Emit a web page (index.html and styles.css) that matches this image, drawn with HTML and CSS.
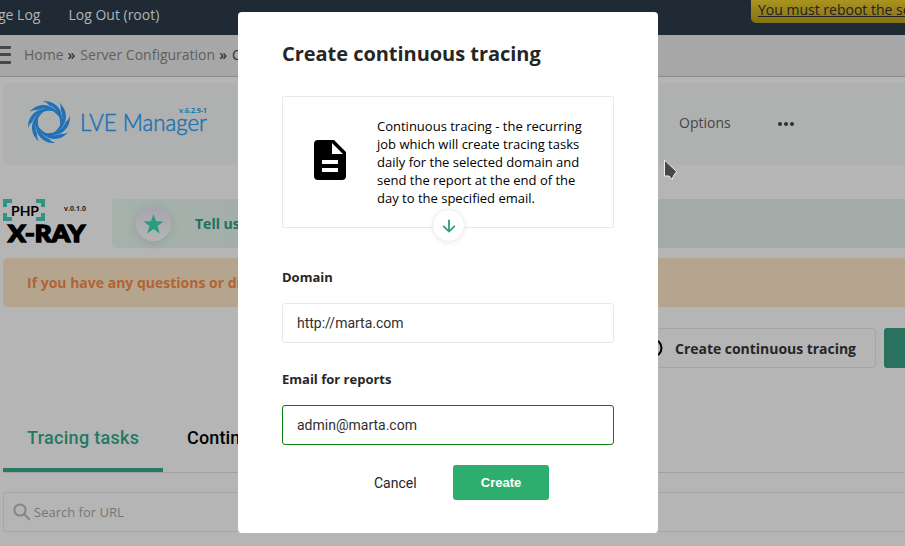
FILE: index.html
```html
<!DOCTYPE html>
<html lang="en">
<head>
<meta charset="utf-8">
<title>LVE Manager</title>
<link rel="stylesheet" href="styles.css">
</head>
<body>
<header class="topbar">
  <nav class="toplinks"><span class="link-log">ge Log</span><span>Log Out (root)</span></nav>
  <a class="reboot">You must reboot the server</a>
</header>
<div class="crumbs">
  <div class="burger"><i></i><i></i><i></i></div>
  <span class="muted">Home</span><b>»</b><span class="muted">Server Configuration</span><b>»</b><span>C</span>
</div>
<main class="page">
  <section class="panel">
    <svg class="swirl" viewBox="-21 -20 42 40">
      <defs><path id="blade" d="M-20 6C-21-7-9-18 9-9.500C-4-13-13-8-16 0Q-19 2-20 6Z"/></defs>
      <use href="#blade"/><use href="#blade" transform="rotate(45)"/><use href="#blade" transform="rotate(90)"/><use href="#blade" transform="rotate(135)"/><use href="#blade" transform="rotate(180)"/><use href="#blade" transform="rotate(225)"/><use href="#blade" transform="rotate(270)"/><use href="#blade" transform="rotate(315)"/>
    </svg>
    <svg class="brand" width="140" height="40" viewBox="0 0 140 40">
      <text class="brand-name" x="0" y="26.5" textLength="127" lengthAdjust="spacingAndGlyphs">LVE Manager</text>
      <text class="brand-version" x="99" y="9" textLength="28" lengthAdjust="spacingAndGlyphs">v.6.2.9-1</text>
    </svg>
    <span class="options">Options</span>
    <span class="dots"><i></i><i></i><i></i></span>
  </section>
  <section class="xrow">
    <svg class="xlogo" width="109" height="49" viewBox="0 0 109 49">
      <path class="bracket" d="M0 0H9V4H4V8H0ZM33 0H42V8H38V4H33ZM0 14H4V18H9V22H0ZM38 14H42V22H33V18H38Z"/>
      <text class="php" x="8" y="17" textLength="28" lengthAdjust="spacingAndGlyphs">PHP</text>
      <text class="xray" x="5" y="42.5" textLength="77" lengthAdjust="spacingAndGlyphs">X-RAY</text>
      <text class="xversion" x="61" y="12" textLength="22" lengthAdjust="spacingAndGlyphs">v.0.1.0</text>
    </svg>
    <div class="feedback">
      <div class="star"><svg width="21" height="20" viewBox="0 0 21 20"><path d="M10.500 0L13 7.300L20.500 7.500L14.500 12.100L16.800 19.500L10.500 15.100L4.200 19.500L6.500 12.100L.5 7.500L8 7.300Z"/></svg></div>
      <span>Tell us</span>
    </div>
  </section>
  <section class="question">If you have any questions or di</section>
  <section class="actions">
    <div class="outline"><svg width="20" height="20" viewBox="0 0 20 20"><circle cx="10" cy="10" r="8.5"/></svg>Create continuous tracing</div>
    <div class="solid"></div>
  </section>
  <nav class="tabs"><span class="tab active">Tracing tasks</span><span class="tab next">Continuous</span></nav>
  <div class="search"><svg width="18" height="18" viewBox="0 0 18 18"><circle cx="7" cy="7" r="5.6"/><path d="M11 11L16.800 16.800"/></svg>Search for URL</div>
</main>
<div class="overlay">
  <div class="modal">
    <h1>Create continuous tracing</h1>
    <div class="info">
      <svg class="doc" width="32" height="40" viewBox="0 0 32 40"><path fill-rule="evenodd" d="M4 0H20L32 12V36Q32 40 28 40H4Q0 40 0 36V4Q0 0 4 0ZM18 3V14H29ZM8 20V24H24V20ZM8 28V32H24V28Z"/></svg>
      <p>Continuous tracing - the recurring<br>job which will create tracing tasks<br>daily for the selected domain and<br>send the report at the end of the<br>day to the specified email.</p>
      <div class="arrow"><svg width="14" height="14" viewBox="0 0 14 14"><path d="M7 .8V12.500M1.200 6.800L7 12.600L12.800 6.800"/></svg></div>
    </div>
    <label>Domain</label>
    <div class="field">http://marta.com</div>
    <label>Email for reports</label>
    <div class="field valid">admin@marta.com</div>
    <div class="buttons"><span class="cancel">Cancel</span><span class="create">Create</span></div>
  </div>
  <svg class="cursor" width="16" height="24" viewBox="0 0 16 24"><path d="M1.500 2V18H6L9 21.500L10.500 18L13.500 13.500Z"/></svg>
</div>
</body>
</html>
```

FILE: styles.css
```css
* { box-sizing: border-box; }
body { margin: 0; width: 905px; height: 546px; overflow: hidden; background: #b5b5b5; font-family: "Open Sans", sans-serif; color: #262626; white-space: nowrap; }
svg { flex: none; display: block; }
.topbar { height: 35px; background: #1f2a35; display: flex; justify-content: space-between; align-items: flex-start; overflow: hidden; font: 14px/20px "Open Sans", sans-serif; color: #b2b4b6; }
.toplinks { display: flex; gap: 28px; padding-top: 5px; margin-left: -2px; }
.reboot { width: 154px; height: 23px; padding-left: 7px; overflow: hidden; border-bottom-left-radius: 5px; background: linear-gradient(#a99321, #857013); color: #222; text-decoration: underline; }
.crumbs { height: 42px; background: #a7a7a7; border-bottom: 1px solid #8d8d8d; display: flex; align-items: center; padding-bottom: 2px; font: 14px/20px "Open Sans", sans-serif; color: #303030; }
.crumbs .muted { color: #606060; }
.crumbs b { font-weight: 600; margin: 0 5px 0 4px; }
.burger { width: 11px; height: 18px; margin-right: 13px; display: flex; flex-direction: column; justify-content: space-between; }
.burger i { height: 3px; background: #484848; border-radius: 0 1px 1px 0; }
.page { padding: 6px 0 0 3px; }
.panel { height: 82px; background: #afb1b0; border-radius: 6px 0 0 6px; display: flex; align-items: center; padding-left: 24px; }
.swirl { width: 44px; height: 42px; margin-right: 9px; margin-top: -4px; fill: #2071b5; }
.brand { margin-right: 459px; margin-top: -1px; }
.brand text { fill: #2071b5; }
.brand-name { font: 300 23px Lato, sans-serif; stroke: #2071b5; stroke-width: .5px; }
.brand-version { font: 700 7px "Open Sans", sans-serif; }
.options { font-size: 14px; width: 99px; margin-top: -3px; color: #454545; }
.dots { display: flex; gap: 2px; }
.dots i { width: 4px; height: 4px; border-radius: 50%; background: #303030; }
.xrow { margin-top: 34px; height: 49px; display: flex; }
.bracket { fill: #319386; }
.php { font: 700 14px Lato, sans-serif; }
.xray { font: 900 23px Lato, sans-serif; stroke: #000; stroke-width: 1.5px; }
.xversion { font: 700 7px "Open Sans", sans-serif; fill: #262626; }
.feedback { flex: 1; background: linear-gradient(90deg, #a5b1ab, #a2aba7 45%); border-radius: 5px 0 0 5px; display: flex; align-items: center; padding-left: 24px; font-weight: 700; font-size: 14px; color: #236f5d; }
.star { width: 35px; height: 35px; border-radius: 50%; background: linear-gradient(#a4a5ad, #b5b5b7); display: grid; place-items: center; margin-right: 24px; box-shadow: 0 2px 8px rgba(60,80,70,.16); fill: #269e7d; }
.question { margin-top: 10px; height: 49px; background: #b5a58e; border-radius: 5px 0 0 5px; padding-left: 24px; font: 700 14px/50px "Open Sans", sans-serif; color: #b16432; }
.actions { margin-top: 21px; height: 40px; display: flex; justify-content: flex-end; gap: 8px; }
.outline { width: 248px; border: 1px solid #a6a6a6; border-radius: 3px; display: flex; align-items: center; gap: 12px; padding-left: 14px; font-weight: 700; font-size: 14px; letter-spacing: -.03px; }
.outline svg { fill: none; stroke: #000; stroke-width: 2; }
.solid { width: 21px; background: #2a7160; border-radius: 3px 0 0 3px; }
.tabs { margin-top: 30px; height: 75px; border-bottom: 1px solid #a2a2a2; display: flex; font: 500 18px/79px Roboto, sans-serif; letter-spacing: .3px; color: #000; }
.tab { padding: 0 24px; height: 74px; }
.tab.active { width: 160px; border-bottom: 4px solid #237963; color: #237963; }
.tab.next { letter-spacing: .15px; }
.search { margin-top: 19px; height: 40px; width: 920px; border: 1px solid #a6a6a6; border-radius: 3px; display: flex; align-items: center; gap: 3px; padding-left: 9px; font-size: 13px; color: #757575; }
.search svg { fill: none; stroke: #858585; stroke-width: 2; }
.overlay { position: fixed; inset: 0; padding-top: 12px; }
.modal { width: 420px; height: 521px; margin-left: 238px; padding: 26px 44px 0; background: #fff; border-radius: 4px; }
.modal h1 { margin: 0 0 26px; font: 700 20px/32px "Open Sans", sans-serif; letter-spacing: -.04px; }
.info { position: relative; height: 132px; border: 1px solid #e9e9e9; border-radius: 2px; display: flex; padding: 20px 0 0 31px; gap: 31px; }
.doc { margin-top: 23px; }
.info p { margin: 0; font-size: 13px; line-height: 18px; color: #000; }
.arrow { position: absolute; left: 149px; bottom: -15px; width: 33px; height: 33px; border: 1px solid #eee; border-radius: 50%; background: #fff; display: grid; place-items: center; box-shadow: 0 1px 5px rgba(0,0,0,.08); }
.arrow path { fill: none; stroke: #309b81; stroke-width: 1.8; }
.modal label { display: block; font-weight: 700; font-size: 13px; line-height: 18px; margin: 40px 0 17px; }
.field { height: 40px; border: 1px solid #e9e9e9; border-radius: 3px; padding-left: 14px; font: 14px/38px Roboto, sans-serif; color: #303030; }
.field + label { margin-top: 27px; }
.valid { border-color: #087f08; }
.buttons { display: flex; margin-top: 20px; padding-left: 92px; }
.cancel { width: 79px; font: 14px/36px Roboto, sans-serif; }
.create { width: 96px; height: 35px; border-radius: 3px; background: #2eae6e; color: #fff; text-align: center; font: 700 13px/36px "Liberation Sans", sans-serif; }
.cursor { position: absolute; left: 663px; top: 158px; fill: #484848; stroke: #eee; stroke-width: 1; }
```
